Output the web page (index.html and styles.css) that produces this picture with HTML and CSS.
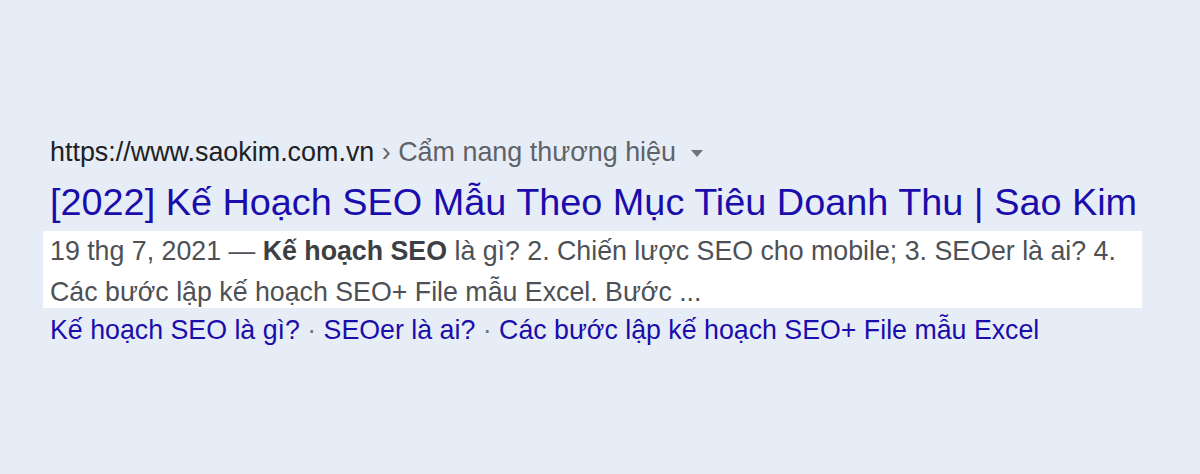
FILE: index.html
```html
<!DOCTYPE html>
<html lang="vi">
<head>
<meta charset="utf-8">
<link rel="stylesheet" href="styles.css">
</head>
<body>
<div class="result">
  <div class="cite">
    <span class="host">https://www.saokim.com.vn</span><span class="crumb"> › Cẩm nang thương hiệu</span>
    <svg class="caret" width="12" height="7" viewBox="0 0 12 7"><path d="M0 0h12L6 7z" fill="#70757a"/></svg>
  </div>
  <h3 class="title">[2022] Kế Hoạch SEO Mẫu Theo Mục Tiêu Doanh Thu | Sao Kim</h3>
  <p class="snippet">19 thg 7, 2021 — <b>Kế hoạch SEO</b> là gì? 2. Chiến lược SEO cho mobile; 3. SEOer là ai? 4. Các bước lập kế hoạch SEO+ File mẫu Excel. Bước ...</p>
  <div class="links">
    <a>Kế hoạch SEO là gì?</a><span class="dot"> · </span><a>SEOer là ai?</a><span class="dot"> · </span><a>Các bước lập kế hoạch SEO+ File mẫu Excel</a>
  </div>
</div>
</body>
</html>
```
FILE: styles.css
```css
html, body {
  margin: 0;
  padding: 0;
}
body {
  background: #e7edf6;
  font-family: "Liberation Sans", Arial, sans-serif;
  width: 1200px;
  height: 474px;
  overflow: hidden;
}
.result {
  padding: 137px 0 0 43px;
  width: 1099px;
}
.cite {
  display: flex;
  align-items: center;
  padding-left: 7px;
  font-size: 26.9px;
  line-height: 30px;
  height: 30px;
}
.host { color: #202124; }
.crumb { color: #5f6368; white-space: pre; }
.caret { margin-left: 15px; margin-top: 2px; }
.title {
  margin: 13px 0 0;
  padding-left: 7px;
  font-weight: normal;
  font-size: 37.85px;
  line-height: 44px;
  height: 44px;
  color: #1a0dab;
  white-space: nowrap;
}
.snippet {
  margin: 7px 0 0;
  background: #ffffff;
  height: 77px;
  padding: 0 0 0 7px;
  font-size: 26.75px;
  line-height: 41px;
  color: #4d5156;
}
.snippet b { color: #3c4043; }
.links {
  margin-top: 6px;
  padding-left: 7px;
  font-size: 26.75px;
  line-height: 32px;
  color: #1a0dab;
}
.dot { color: #70757a; white-space: pre; }
```
